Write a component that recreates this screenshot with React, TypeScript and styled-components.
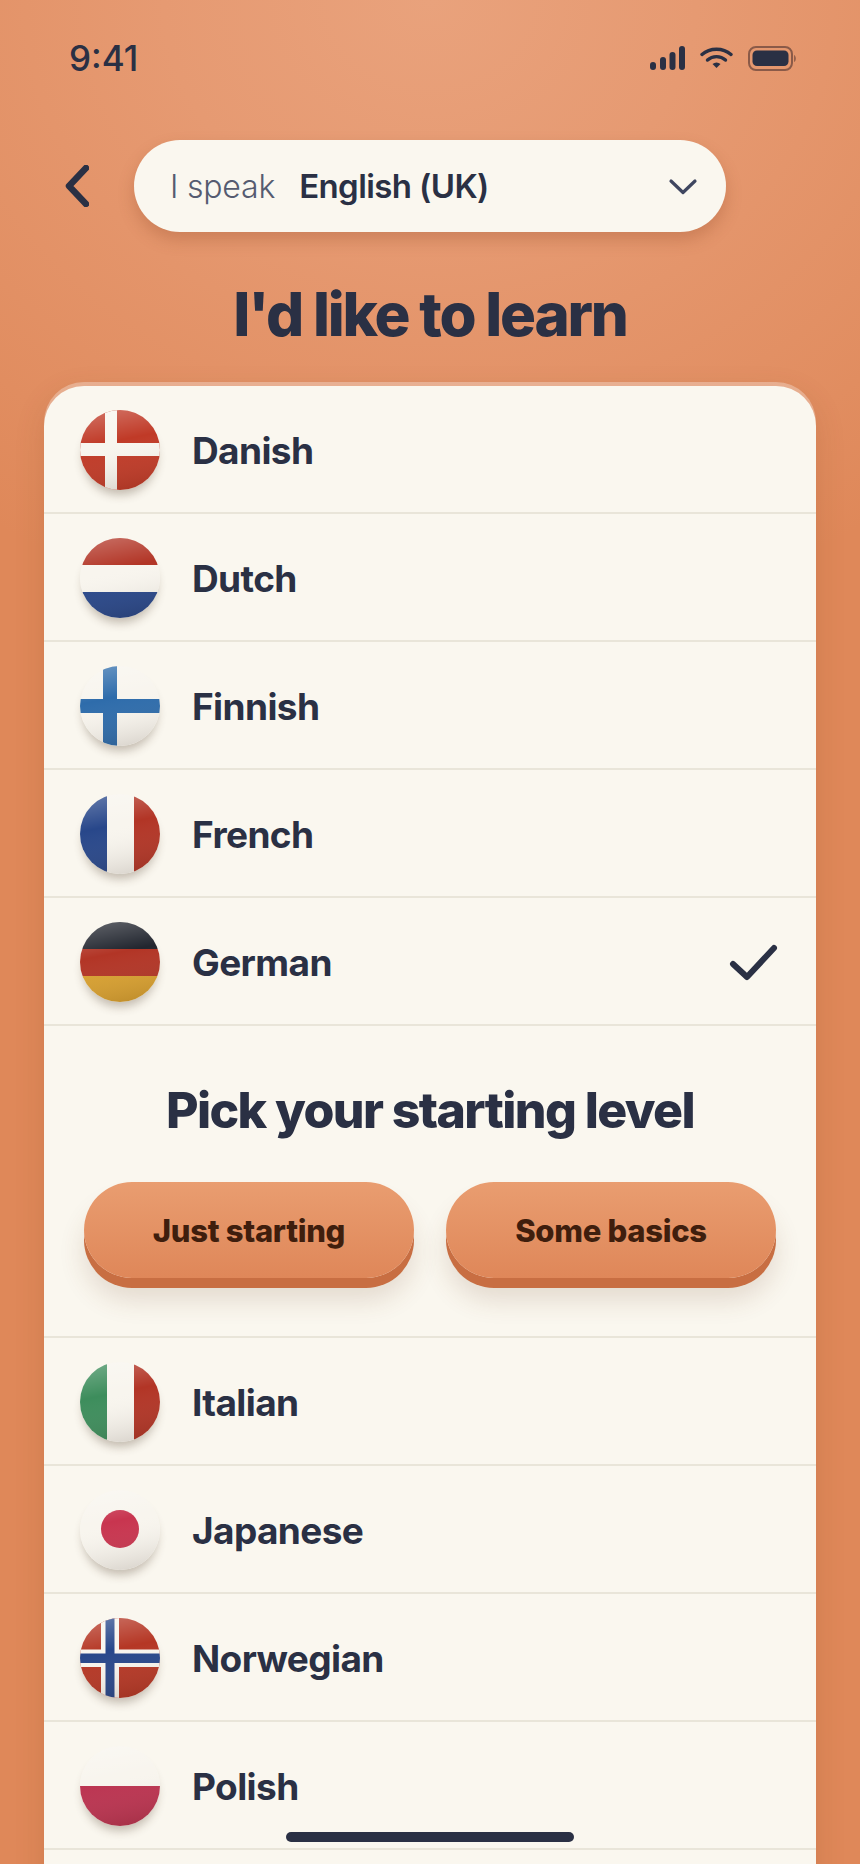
import React from "react";
import styled, { createGlobalStyle } from "styled-components";

const GlobalStyle = createGlobalStyle`
  html, body {
    margin: 0;
    padding: 0;
    height: 1864px;
    overflow: hidden;
    background: #e08a5c;
    font-family: Inter, "Noto Sans", sans-serif;
    -webkit-font-smoothing: antialiased;
  }
`;

const INK = "#2a3044";

const Screen = styled.div`
  position: relative;
  width: 860px;
  height: 1864px;
  overflow: hidden;
  background: radial-gradient(ellipse 760px 640px at 50% 0, #e9a27c 0%, #e69a72 35%, rgba(227, 140, 94, 0) 100%), #df8859;
`;

const StatusBar = styled.div`
  display: flex;
  justify-content: space-between;
  align-items: center;
  height: 26px;
  padding: 45px 63px 0 69px;
`;

const Clock = styled.span`
  font-size: 35px;
  font-weight: 500;
  color: ${INK};
`;

const StatusIcons = styled.div`
  display: flex;
  align-items: center;
  gap: 15px;
`;

const TopRow = styled.div`
  display: flex;
  align-items: center;
  gap: 45px;
  margin-top: 69px;
  padding-left: 65px;
`;

const BackIcon = styled.svg`
  width: 24px;
  height: 42px;
  flex: none;
`;

const SpeakPill = styled.div`
  display: flex;
  align-items: center;
  width: 592px;
  height: 92px;
  box-sizing: border-box;
  padding: 0 28px 0 36px;
  border-radius: 46px;
  background: #faf7ef;
  box-shadow: 0 8px 16px rgba(140, 70, 35, 0.28);
`;

const SpeakLabel = styled.span`
  font-size: 32px;
  font-weight: 300;
  letter-spacing: -0.2px;
  color: #555b70;
`;

const SpeakValue = styled.span`
  margin-left: 24px;
  font-size: 33px;
  font-weight: 600;
  letter-spacing: -0.6px;
  color: ${INK};
`;

const PillChevron = styled.svg`
  width: 30px;
  height: 17px;
  margin-left: auto;
`;

const Title = styled.h1`
  margin: 48px 0 0;
  text-align: center;
  font-size: 60px;
  line-height: 68px;
  font-weight: 800;
  letter-spacing: -2.2px;
  color: ${INK};
`;

const Card = styled.div`
  margin: 38px 44px 0;
  padding-bottom: 60px;
  border-radius: 40px 40px 0 0;
  background: #faf7ef;
  box-shadow: 0 -4px 0 rgba(255, 255, 255, 0.3), 0 8px 30px rgba(120, 60, 30, 0.16);
`;

const Row = styled.div`
  display: flex;
  align-items: center;
  height: 124px;
  padding: 2px 36px 0;
  border-bottom: 2px solid #e9e5d9;
`;

const FlagBall = styled.svg`
  flex: none;
  width: 80px;
  height: 80px;
  border-radius: 50%;
  box-shadow: 0 8px 10px -3px rgba(70, 50, 30, 0.3);
`;

const LangName = styled.span`
  margin-left: 32px;
  font-size: 37px;
  font-weight: 650;
  letter-spacing: -0.6px;
  color: ${INK};
`;

const CheckIcon = styled.svg`
  width: 52px;
  height: 40px;
  margin-left: auto;
`;

const LevelPanel = styled.div`
  padding: 54px 40px 0;
  height: 256px;
  border-bottom: 2px solid #e9e5d9;
`;

const LevelTitle = styled.h2`
  margin: 0;
  text-align: center;
  font-size: 50px;
  line-height: 60px;
  font-weight: 800;
  letter-spacing: -1.6px;
  color: ${INK};
`;

const LevelButtons = styled.div`
  display: grid;
  grid-template-columns: 330px 330px;
  justify-content: space-between;
  margin-top: 42px;
`;

const LevelButton = styled.button`
  height: 96px;
  border: none;
  border-radius: 48px;
  background: linear-gradient(180deg, #e99d70 0%, #df8759 100%);
  box-shadow: 0 10px 0 #c86e42, 0 22px 26px rgba(110, 70, 40, 0.16);
  font-family: inherit;
  font-size: 31px;
  font-weight: 800;
  letter-spacing: -0.3px;
  color: #3f1e0d;
`;

const HomeBar = styled.div`
  position: absolute;
  left: 286px;
  bottom: 22px;
  width: 288px;
  height: 10px;
  border-radius: 5px;
  background: ${INK};
`;

type Part = { x: number; y: number; w: number; h: number; fill: string };

const WHITE = "#f8f5ee";
const RED = "#b23526";
const BLUE = "#28478a";

const stripesH = (a: string, b: string, c: string): Part[] => [
  { x: 0, y: 0, w: 80, h: 27, fill: a },
  { x: 0, y: 27, w: 80, h: 27, fill: b },
  { x: 0, y: 54, w: 80, h: 26, fill: c },
];

const stripesV = (a: string, b: string, c: string): Part[] => [
  { x: 0, y: 0, w: 27, h: 80, fill: a },
  { x: 27, y: 0, w: 27, h: 80, fill: b },
  { x: 54, y: 0, w: 26, h: 80, fill: c },
];

const FLAG_PARTS: Record<string, Part[]> = {
  danish: [
    { x: 0, y: 0, w: 80, h: 80, fill: "#c03a27" },
    { x: 25, y: 0, w: 12, h: 80, fill: WHITE },
    { x: 0, y: 33, w: 80, h: 13, fill: WHITE },
  ],
  dutch: stripesH(RED, WHITE, BLUE),
  finnish: [
    { x: 0, y: 0, w: 80, h: 80, fill: WHITE },
    { x: 23, y: 0, w: 14, h: 80, fill: "#2e6cab" },
    { x: 0, y: 33, w: 80, h: 14, fill: "#2e6cab" },
  ],
  french: stripesV(BLUE, WHITE, RED),
  german: stripesH("#22262f", RED, "#d9a130"),
  italian: stripesV("#3d8d5c", WHITE, RED),
  japanese: [{ x: 0, y: 0, w: 80, h: 80, fill: WHITE }],
  norwegian: [
    { x: 0, y: 0, w: 80, h: 80, fill: "#b53725" },
    { x: 21, y: 0, w: 18, h: 80, fill: WHITE },
    { x: 0, y: 31.5, w: 80, h: 17.5, fill: WHITE },
    { x: 25.5, y: 0, w: 9, h: 80, fill: BLUE },
    { x: 0, y: 35.5, w: 80, h: 9.5, fill: BLUE },
  ],
  polish: [
    { x: 0, y: 0, w: 80, h: 40, fill: WHITE },
    { x: 0, y: 40, w: 80, h: 40, fill: "#bb3350" },
  ],
};

function Flag({ code }: { code: string }) {
  return (
    <FlagBall viewBox="0 0 80 80">
      <defs>
        <linearGradient id={`shine-${code}`} x1="0.3" y1="0" x2="0.5" y2="1">
          <stop offset="0" stopColor="#fff" stopOpacity="0.26" />
          <stop offset="0.4" stopColor="#fff" stopOpacity="0" />
          <stop offset="1" stopColor="#3a2a20" stopOpacity="0.14" />
        </linearGradient>
      </defs>
      {FLAG_PARTS[code].map((p, i) => (
        <rect key={i} x={p.x} y={p.y} width={p.w} height={p.h} fill={p.fill} />
      ))}
      {code === "japanese" && <circle cx="40" cy="39" r="19" fill="#c8354f" />}
      <rect width="80" height="80" fill={`url(#shine-${code})`} />
    </FlagBall>
  );
}

function LangRow({ code, name, checked }: { code: string; name: string; checked?: boolean }) {
  return (
    <Row>
      <Flag code={code} />
      <LangName>{name}</LangName>
      {checked && (
        <CheckIcon viewBox="0 0 52 40" fill="none">
          <path d="M5 22 L19 35 L46 6" stroke={INK} strokeWidth="6" strokeLinecap="round" strokeLinejoin="round" />
        </CheckIcon>
      )}
    </Row>
  );
}

export default function App() {
  return (
    <Screen>
      <GlobalStyle />
      <StatusBar>
        <Clock>9:41</Clock>
        <StatusIcons>
          <svg width="35" height="24" viewBox="0 0 35 24" fill={INK}>
            <rect x="0" y="16" width="6" height="8" rx="3" />
            <rect x="10" y="11" width="6" height="13" rx="3" />
            <rect x="19.5" y="6" width="6" height="18" rx="3" />
            <rect x="29" y="0" width="6" height="24" rx="3" />
          </svg>
          <svg width="33" height="22" viewBox="0 0 33 22" fill="none" stroke={INK} strokeWidth="3.4" strokeLinecap="round">
            <path d="M2 7.5 C10 0.5 23 0.5 31 7.5" />
            <path d="M7.5 13 C12.5 8.5 20.5 8.5 25.5 13" />
            <path d="M12.5 17 L16.5 21 L20.5 17 C18 15 15 15 12.5 17 Z" fill={INK} stroke="none" />
          </svg>
          <svg width="49" height="25" viewBox="0 0 49 25" fill="none">
            <rect x="1" y="1" width="43" height="23" rx="7" stroke="#8a5a48" strokeWidth="2" />
            <rect x="4.5" y="4.5" width="36" height="15.5" rx="4.5" fill={INK} />
            <path d="M46 9 C48.5 10 48.5 15 46 16 Z" fill="#96604a" />
          </svg>
        </StatusIcons>
      </StatusBar>

      <TopRow>
        <BackIcon viewBox="0 0 24 42" fill="none">
          <path d="M21 3 L4 21 L21 39" stroke={INK} strokeWidth="6.5" strokeLinecap="round" strokeLinejoin="round" />
        </BackIcon>
        <SpeakPill>
          <SpeakLabel>I speak</SpeakLabel>
          <SpeakValue>English (UK)</SpeakValue>
          <PillChevron viewBox="0 0 30 17" fill="none">
            <path d="M3 3 L15 14.5 L27 3" stroke="#3f4660" strokeWidth="3.2" strokeLinecap="round" strokeLinejoin="round" />
          </PillChevron>
        </SpeakPill>
      </TopRow>

      <Title>I'd like to learn</Title>

      <Card>
        <LangRow code="danish" name="Danish" />
        <LangRow code="dutch" name="Dutch" />
        <LangRow code="finnish" name="Finnish" />
        <LangRow code="french" name="French" />
        <LangRow code="german" name="German" checked />
        <LevelPanel>
          <LevelTitle>Pick your starting level</LevelTitle>
          <LevelButtons>
            <LevelButton>Just starting</LevelButton>
            <LevelButton>Some basics</LevelButton>
          </LevelButtons>
        </LevelPanel>
        <LangRow code="italian" name="Italian" />
        <LangRow code="japanese" name="Japanese" />
        <LangRow code="norwegian" name="Norwegian" />
        <LangRow code="polish" name="Polish" />
      </Card>

      <HomeBar />
    </Screen>
  );
}
